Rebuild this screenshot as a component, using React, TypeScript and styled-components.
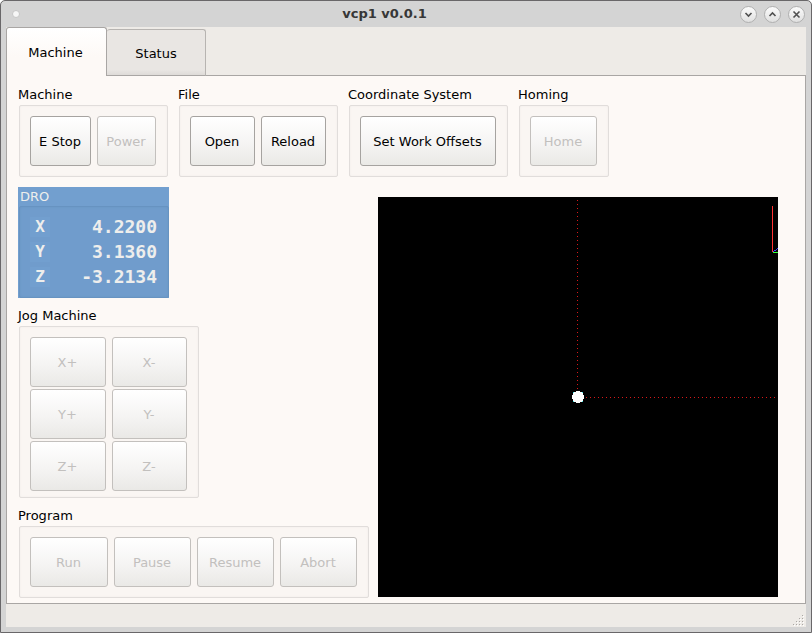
import React, { useState } from "react";
import styled, { createGlobalStyle, css } from "styled-components";

const GlobalStyle = createGlobalStyle`
  *, *::before, *::after { box-sizing: border-box; }
  body { margin: 0; background: #fff; }
  body, button { font-family: "DejaVu Sans", sans-serif; font-size: 13px; line-height: 16px; color: #000; }
`;

const WindowFrame = styled.div`
  display: flex;
  flex-direction: column;
  min-height: 100vh;
  padding: 0 5px 5px;
  background: #d4d4d4;
  border: 1px solid #696769;
  border-radius: 5px 5px 0 0;
`;

const TitleBar = styled.header`
  display: grid;
  grid-template-columns: 1fr auto 1fr;
  align-items: center;
  height: 26px;
  padding: 0 1px 0 6px;
`;

const Title = styled.h1`
  margin: 0;
  padding-right: 48px;
  font-size: 13px;
  font-weight: bold;
  color: #373737;
`;

const roundButton = css`
  padding: 0;
  border-radius: 50%;
  background: linear-gradient(#fbfbfb, #e0e0e0);
`;

const MenuDot = styled.button`
  ${roundButton}
  width: 8px;
  height: 8px;
  border: 1px solid #c6c6c6;
  background: #f6f6f6;
`;

const WindowButtons = styled.div`
  display: flex;
  justify-content: flex-end;
  gap: 7px;
`;

const WindowButton = styled.button`
  ${roundButton}
  display: grid;
  place-items: center;
  width: 17px;
  height: 17px;
  border: 1px solid #b0b0b0;
`;

const Glyph = styled.svg`
  display: block;
  fill: none;
  stroke: #505050;
  stroke-width: 1.6;
`;

const TabBar = styled.div`
  display: flex;
  align-items: flex-end;
  height: 49px;
  background: #eeebe7;
`;

const Tab = styled.button<{ $active: boolean }>`
  width: ${(p) => (p.$active ? 101 : 99)}px;
  height: ${(p) => (p.$active ? 49 : 47)}px;
  padding: 2px 2px 0 0;
  border: 1px solid #a9a6a4;
  border-bottom: 0;
  border-radius: 3px 3px 0 0;
  background: ${(p) =>
    p.$active
      ? "linear-gradient(#ffffff, #fdf9f6 60%)"
      : "linear-gradient(#e9e6e3, #e9e6e3 88%, #dedbd8)"};
  ${(p) => !p.$active && css`
    padding: 2px 0 0;
    border-left-width: 0;
    border-color: #b7b4b1;
    border-bottom: 1px solid #a9a6a4;
  `}
`;

const TabFiller = styled.div`
  flex: 1;
  height: 1px;
  background: #a9a6a4;
`;

const Pane = styled.main`
  display: flex;
  flex-direction: column;
  flex: 1;
  gap: 10px;
  padding: 11px 27px 5px 11px;
  border: 1px solid #a9a6a4;
  border-top: 0;
  background: #fdf9f6;
`;

const TopRow = styled.div`
  display: flex;
  gap: 10px;
`;

const MainRow = styled.div`
  display: flex;
  align-items: flex-end;
  gap: 9px;
`;

const SideColumn = styled.div`
  display: flex;
  flex-direction: column;
  align-items: flex-start;
  gap: 10px;
`;

const Group = styled.fieldset`
  min-width: 0;
  margin: 0;
  padding: 0;
  border: 0;
`;

const GroupTitle = styled.legend`
  display: block;
  height: 18px;
  padding: 0;
`;

const GroupBox = styled.div<{ $columns: number; $compact?: boolean }>`
  display: grid;
  grid-template-columns: repeat(${(p) => p.$columns}, auto);
  gap: 2px 6px;
  margin-left: 1px;
  padding: 10px 11px ${(p) => (p.$compact ? 6 : 10)}px 10px;
  border: 1px solid #e1dddb;
  border-radius: 2px;
  background: #faf6f3;
  box-shadow: inset 0 0 2px #eeeae7;
`;

const PushButton = styled.button<{ $width: number }>`
  width: ${(p) => p.$width}px;
  height: 50px;
  padding: 2px 1px 0 0;
  border: 1px solid #a6a3a0;
  border-radius: 3px;
  background: linear-gradient(#ffffff, #f5f4f3 55%, #eae9e6);
  white-space: nowrap;
  &:disabled {
    border-color: #c3c0bd;
    color: #c2c0be;
  }
`;

const Readout = styled.section`
  width: 151px;
  background: #729fcf;
  color: #eeeeec;
`;

const ReadoutTitle = styled.h2`
  height: 19px;
  margin: 0;
  padding: 2px 2px 0;
  font-size: 13px;
  font-weight: normal;
`;

const AxisTable = styled.table`
  width: 150px;
  height: 92px;
  margin-left: 1px;
  padding: 7px 11px 8px 10px;
  border: 1px solid #6793c1;
  border-radius: 2px;
  border-spacing: 0;
  background: #709ccc;
  box-shadow: inset 0 0 2px #6793c1;
  font-family: "DejaVu Sans Mono", monospace;
  font-weight: bold;
  color: #eeeeec;
`;

const AxisName = styled.th`
  width: 20px;
  height: 25px;
  padding: 0;
  font-size: 16px;
  line-height: 20px;
`;

const AxisTag = styled.span`
  display: block;
  background: #729fcf;
`;

const AxisValue = styled.td`
  padding: 0;
  font-size: 18px;
  line-height: 20px;
  text-align: right;
`;

const Plot = styled.svg`
  display: block;
  flex: 1;
  min-width: 0;
  max-width: 400px;
  aspect-ratio: 1;
  margin-bottom: 1px;
  background: #000;
`;

const StatusBar = styled.footer`
  display: flex;
  justify-content: flex-end;
  align-items: flex-end;
  height: 23px;
  padding: 0 2px 1px 0;
  background: #eeebe7;
`;

type Action = { label: string; width: number; enabled?: boolean };

function ActionGroup({ title, actions, columns, compact }: {
  title: string;
  actions: Action[];
  columns?: number;
  compact?: boolean;
}) {
  return (
    <Group>
      <GroupTitle>{title}</GroupTitle>
      <GroupBox $columns={columns ?? actions.length} $compact={compact}>
        {actions.map((a) => (
          <PushButton key={a.label} type="button" $width={a.width} disabled={!a.enabled}>
            {a.label}
          </PushButton>
        ))}
      </GroupBox>
    </Group>
  );
}

const windowControls = [
  { name: "Minimize", path: "M1.500 3 L4.500 6 L7.500 3" },
  { name: "Maximize", path: "M1.500 6 L4.500 3 L7.500 6" },
  { name: "Close", path: "M1.500 1.500 L7.500 7.500 M7.500 1.500 L1.500 7.500" },
];

const axes = [
  ["X", "4.2200"],
  ["Y", "3.1360"],
  ["Z", "-3.2134"],
];

const tabs = ["Machine", "Status"];

const gripDots = [[9, 0], [6, 3], [9, 3], [3, 6], [6, 6], [9, 6], [0, 9], [3, 9], [6, 9], [9, 9]];

export default function App() {
  const [tab, setTab] = useState("Machine");
  return (
    <>
      <GlobalStyle />
      <WindowFrame>
        <TitleBar>
          <MenuDot type="button" aria-label="Window menu" />
          <Title>vcp1 v0.0.1</Title>
          <WindowButtons>
            {windowControls.map((c) => (
              <WindowButton key={c.name} type="button" aria-label={c.name}>
                <Glyph width="9" height="9" viewBox="0 0 9 9"><path d={c.path} /></Glyph>
              </WindowButton>
            ))}
          </WindowButtons>
        </TitleBar>
        <TabBar role="tablist">
          {tabs.map((t) => (
            <Tab key={t} type="button" role="tab" aria-selected={t === tab} $active={t === tab} onClick={() => setTab(t)}>
              {t}
            </Tab>
          ))}
          <TabFiller />
        </TabBar>
        <Pane>
          <TopRow>
            <ActionGroup title="Machine" actions={[{ label: "E Stop", width: 61, enabled: true }, { label: "Power", width: 59 }]} />
            <ActionGroup title="File" actions={[{ label: "Open", width: 65, enabled: true }, { label: "Reload", width: 65, enabled: true }]} />
            <ActionGroup title="Coordinate System" actions={[{ label: "Set Work Offsets", width: 136, enabled: true }]} />
            <ActionGroup title="Homing" actions={[{ label: "Home", width: 67 }]} />
          </TopRow>
          <MainRow>
            <SideColumn>
              <Readout>
                <ReadoutTitle>DRO</ReadoutTitle>
                <AxisTable>
                  <tbody>
                    {axes.map(([name, value]) => (
                      <tr key={name}>
                        <AxisName scope="row"><AxisTag>{name}</AxisTag></AxisName>
                        <AxisValue>{value}</AxisValue>
                      </tr>
                    ))}
                  </tbody>
                </AxisTable>
              </Readout>
              <ActionGroup
                title="Jog Machine"
                columns={2}
                compact
                actions={[
                  { label: "X+", width: 76 }, { label: "X-", width: 75 },
                  { label: "Y+", width: 76 }, { label: "Y-", width: 75 },
                  { label: "Z+", width: 76 }, { label: "Z-", width: 75 },
                ]}
              />
              <ActionGroup
                title="Program"
                actions={[
                  { label: "Run", width: 78 }, { label: "Pause", width: 77 },
                  { label: "Resume", width: 77 }, { label: "Abort", width: 77 },
                ]}
              />
            </SideColumn>
            <Plot viewBox="0 0 400 400" role="img" aria-label="Tool path" shapeRendering="crispEdges">
              <path d="M199.500 3V194" stroke="#d81818" strokeDasharray="1 3" />
              <path d="M208 200.500H398" stroke="#d81818" strokeDasharray="1 3" />
              <circle cx="200" cy="200" r="6" fill="#fff" />
              <path d="M195 195.500h1M204 195.500h1M195 204.500h1M204 204.500h1" stroke="#40e8e8" />
              <path d="M394.500 9V55" stroke="#ff3333" />
              <path d="M395 55.500H400" stroke="#33ff33" />
              <path d="M395 54.500h1M396 53.500h2M398 52.500h1M399 51.500h1" stroke="#4040ff" />
            </Plot>
          </MainRow>
        </Pane>
        <StatusBar>
          <svg width="11" height="11" viewBox="0 0 11 11" aria-hidden="true">
            {gripDots.map(([x, y]) => (
              <g key={`${x}-${y}`}>
                <rect x={x + 1} y={y + 1} width="1" height="1" fill="#fff" />
                <rect x={x} y={y} width="1" height="1" fill="#aaa7a4" />
              </g>
            ))}
          </svg>
        </StatusBar>
      </WindowFrame>
    </>
  );
}
